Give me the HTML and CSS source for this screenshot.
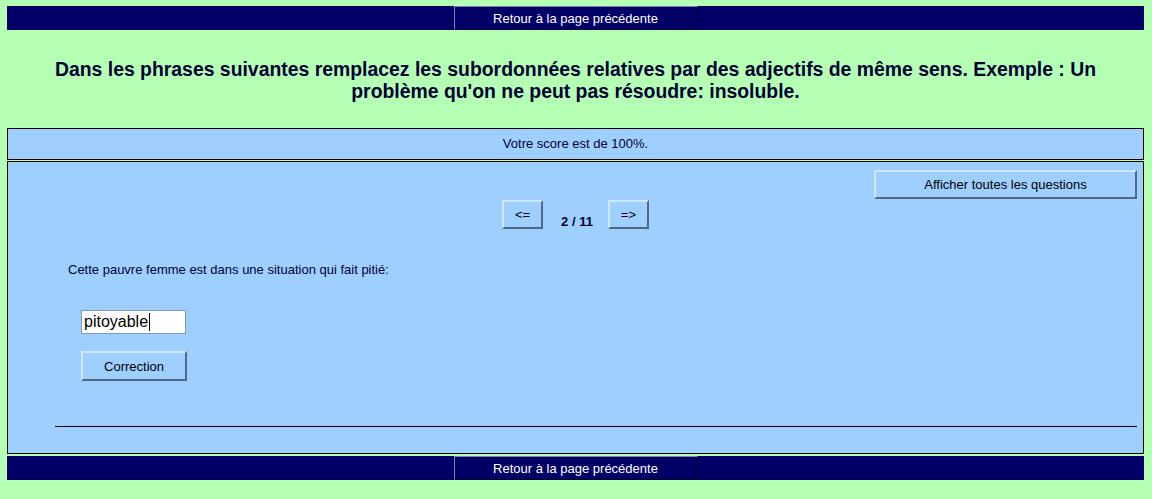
FILE: index.html
```html
<!DOCTYPE html>
<html lang="fr">
<head>
<meta charset="utf-8">
<title>Exercice</title>
<link rel="stylesheet" href="styles.css">
</head>
<body>
<div class="navbar"><button class="navbtn">Retour à la page précédente</button></div>
<div class="titles"><h2 class="subtitle">Dans les phrases suivantes remplacez les subordonnées relatives par des adjectifs de même sens. Exemple : Un problème qu'on ne peut pas résoudre: insoluble.</h2></div>
<div class="stdbox score">Votre score est de 100%.</div>
<div class="stdbox main">
  <div class="toprow"><button class="btn showall">Afficher toutes les questions</button></div>
  <div class="qnav">
    <button class="btn arrow">&lt;=</button>
    <span class="counter">2 / 11</span>
    <button class="btn arrow">=&gt;</button>
  </div>
  <div class="question">Cette pauvre femme est dans une situation qui fait pitié:</div>
  <div class="answer"><span class="field">pitoyable<span class="caret"></span></span></div>
  <div class="check"><button class="btn correction">Correction</button></div>
  <div class="rule"></div>
</div>
<div class="navbar bottom"><button class="navbtn">Retour à la page précédente</button></div>
</body>
</html>
```

FILE: styles.css
```css
html, body {
  background: #b5ffb5;
}
body {
  margin: 6px 8px 0 7px;
  font-family: "Liberation Sans", Arial, sans-serif;
  color: #000033;
}
.navbar {
  background: #000066;
  height: 24px;
  display: flex;
  justify-content: center;
}
.navbtn {
  width: 244px;
  height: 24px;
  margin: 0;
  padding: 0;
  background: #000066;
  color: #ffffff;
  font-family: "Liberation Sans", Arial, sans-serif;
  font-size: 13px;
  border-top: 1px solid #8080b3;
  border-left: 1px solid #8080b3;
  border-right: 1px solid #000033;
  border-bottom: 1px solid #000033;
}
.bottom {
  margin-top: 2px;
}
.titles {
  padding: 28px 20px 26px;
}
.subtitle {
  margin: 0;
  text-align: center;
  font-size: 19.4px;
  line-height: 22px;
  font-weight: bold;
  color: #000033;
}
.stdbox {
  background: #9fcfff;
  border: 1px solid #000000;
}
.score {
  height: 30px;
  line-height: 30px;
  text-align: center;
  font-size: 13px;
  color: #000033;
  margin-bottom: 1px;
}
.main {
  height: 291px;
  padding: 0 6px 0 0;
}
.btn {
  background: #9fcfff;
  font-family: "Liberation Sans", Arial, sans-serif;
  font-size: 13px;
  color: #000000;
  margin: 0;
  padding: 0;
  border-top: 2px solid #cfe7ff;
  border-left: 2px solid #cfe7ff;
  border-right: 2px solid #52687e;
  border-bottom: 2px solid #52687e;
}
.toprow {
  display: flex;
  justify-content: flex-end;
  padding-top: 8px;
}
.showall {
  width: 263px;
  height: 29px;
}
.qnav {
  display: flex;
  justify-content: center;
  align-items: flex-end;
  margin-top: 1px;
  padding-left: 6px;
}
.arrow {
  width: 41px;
  height: 29px;
}
.counter {
  font-size: 13px;
  font-weight: bold;
  line-height: 15px;
  margin: 0 15px 0 18px;
}
.question {
  font-size: 13px;
  line-height: 15px;
  margin: 33px 0 0 60px;
}
.answer {
  margin: 33px 0 0 73px;
}
.field {
  display: inline-flex;
  align-items: center;
  box-sizing: border-box;
  width: 105px;
  height: 24px;
  background: #ffffff;
  border: 1px solid #7f9db9;
  padding: 0 2px;
  font-size: 16px;
  color: #000000;
}
.caret {
  display: inline-block;
  width: 1px;
  height: 18px;
  background: #000000;
  margin-left: 1px;
}
.check {
  margin: 17px 0 0 73px;
}
.correction {
  width: 106px;
  height: 30px;
}
.rule {
  margin: 45px 0 0 47px;
  height: 1px;
  background: #000000;
}
```
